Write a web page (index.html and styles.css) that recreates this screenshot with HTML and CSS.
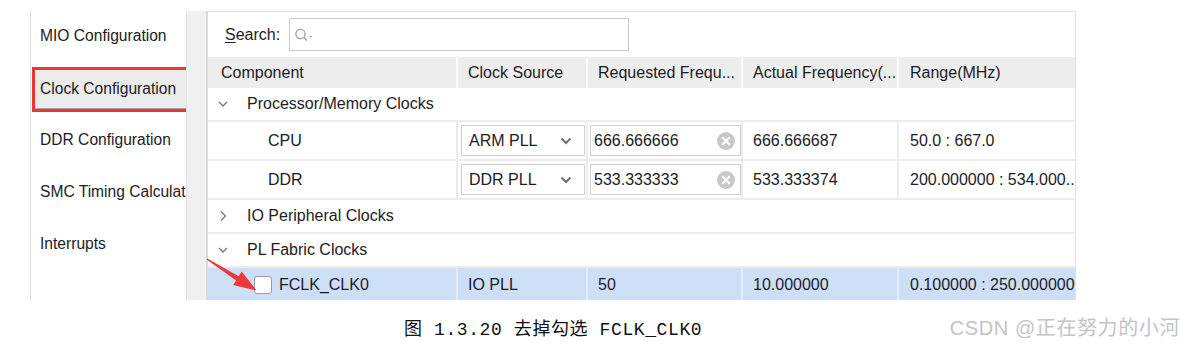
FILE: index.html
```html
<!DOCTYPE html>
<html lang="zh">
<head>
<meta charset="utf-8">
<title>Clock Configuration</title>
<link rel="stylesheet" href="styles.css">
</head>
<body>
<div class="page">
  <div class="app">
    <nav class="sidebar">
      <div class="nav-item">MIO Configuration</div>
      <div class="nav-item selected">Clock Configuration</div>
      <div class="nav-item">DDR Configuration</div>
      <div class="nav-item">SMC Timing Calculation</div>
      <div class="nav-item">Interrupts</div>
    </nav>
    <div class="splitter"></div>
    <section class="panel">
      <div class="search-row">
        <span class="search-label"><u>S</u>earch:</span>
        <div class="search-box">
          <svg class="search-icon" width="22" height="16" viewBox="0 0 22 16">
            <circle cx="6.5" cy="7" r="4.6" fill="none" stroke="#a4a4a4" stroke-width="1.4"/>
            <line x1="9.8" y1="10.3" x2="13" y2="13.5" stroke="#a4a4a4" stroke-width="1.6"/>
            <path d="M15 9 L18.4 9 L16.7 10.8 Z" fill="#a4a4a4"/>
          </svg>
        </div>
      </div>
      <div class="table">
        <div class="row header">
          <div class="cell first">Component</div>
          <div class="cell">Clock Source</div>
          <div class="cell">Requested Frequ...</div>
          <div class="cell">Actual Frequency(...</div>
          <div class="cell">Range(MHz)</div>
        </div>
        <div class="row group">
          <svg class="chev" width="10" height="10" viewBox="0 0 10 10"><path d="M1 3 L5 7 L9 3" fill="none" stroke="#777" stroke-width="1.3"/></svg>
          <span>Processor/Memory Clocks</span>
        </div>
        <div class="row data tall">
          <div class="cell name">CPU</div>
          <div class="cell boxed"><div class="select"><span>ARM PLL</span>
            <svg width="12" height="8" viewBox="0 0 12 8"><path d="M1.5 1.5 L6 6 L10.5 1.5" fill="none" stroke="#6f6f6f" stroke-width="2"/></svg></div></div>
          <div class="cell boxed input-cell"><div class="input"><span>666.666666</span>
            <svg width="20" height="20" viewBox="0 0 20 20"><circle cx="10" cy="10" r="9" fill="#c8c8c8"/><path d="M6.3 6.3 L13.7 13.7 M13.7 6.3 L6.3 13.7" stroke="#fff" stroke-width="2.2"/></svg></div></div>
          <div class="cell">666.666687</div>
          <div class="cell last">50.0 : 667.0</div>
        </div>
        <div class="row data tall">
          <div class="cell name">DDR</div>
          <div class="cell boxed"><div class="select"><span>DDR PLL</span>
            <svg width="12" height="8" viewBox="0 0 12 8"><path d="M1.5 1.5 L6 6 L10.5 1.5" fill="none" stroke="#6f6f6f" stroke-width="2"/></svg></div></div>
          <div class="cell boxed input-cell"><div class="input"><span>533.333333</span>
            <svg width="20" height="20" viewBox="0 0 20 20"><circle cx="10" cy="10" r="9" fill="#c8c8c8"/><path d="M6.3 6.3 L13.7 13.7 M13.7 6.3 L6.3 13.7" stroke="#fff" stroke-width="2.2"/></svg></div></div>
          <div class="cell">533.333374</div>
          <div class="cell last">200.000000 : 534.000...</div>
        </div>
        <div class="row group">
          <svg class="chev" width="10" height="12" viewBox="0 0 10 12"><path d="M3 1.5 L7.5 6 L3 10.5" fill="none" stroke="#777" stroke-width="1.3"/></svg>
          <span>IO Peripheral Clocks</span>
        </div>
        <div class="row group">
          <svg class="chev" width="10" height="10" viewBox="0 0 10 10"><path d="M1 3 L5 7 L9 3" fill="none" stroke="#777" stroke-width="1.3"/></svg>
          <span>PL Fabric Clocks</span>
        </div>
        <div class="row data selected-row">
          <div class="cell name check-cell"><span class="checkbox"></span>FCLK_CLK0</div>
          <div class="cell">IO PLL</div>
          <div class="cell">50</div>
          <div class="cell">10.000000</div>
          <div class="cell last">0.100000 : 250.000000</div>
        </div>
      </div>
    </section>
  </div>
  <svg class="arrow" width="70" height="50" viewBox="200 250 70 50">
    <polygon points="207.4,258.4 238.7,276.2 241.7,271.5 256.5,290.5 233.1,285.1 236.1,280.4 206.6,259.6" fill="#ee3a3a"/>
  </svg>
  <div class="caption-row">
    <div class="caption">图 1.3.20 去掉勾选 FCLK_CLK0</div>
    <div class="watermark">CSDN @正在努力的小河</div>
  </div>
</div>
</body>
</html>
```

FILE: styles.css
```css
* { box-sizing: border-box; }
html, body { margin: 0; padding: 0; background: #fff; }
body {
  width: 1185px;
  height: 355px;
  overflow: hidden;
  font-family: "Liberation Sans", Arial, sans-serif;
  font-size: 16px;
  color: #1c1c24;
}
.page {
  position: relative;
  width: 1185px;
  height: 355px;
  padding-top: 10px;
}
.app {
  display: flex;
  margin-left: 30px;
  width: 1046px;
  height: 290px;
}

/* sidebar */
.sidebar {
  width: 156px;
  flex: none;
  border-left: 1px solid #dcdcdc;
  margin-top: 1px;
  display: flex;
  flex-direction: column;
  font-size: 15.6px;
}
.nav-item {
  height: 52px;
  flex: none;
  display: flex;
  align-items: center;
  padding-left: 9px;
  white-space: nowrap;
  overflow: hidden;
  margin-top: -1px;
  margin-bottom: 1px;
}
.nav-item.selected {
  height: 39px;
  margin: 7px 0 6px 4px;
  padding-left: 5px;
  background: #ebebeb;
  border-bottom: 1px solid #a3a3a3;
  outline: 3px solid #ee3535;
}

/* splitter */
.splitter {
  width: 22px;
  flex: none;
  margin-top: 1px;
  background: #f0f0f0;
  border-left: 1px solid #e3e3e3;
  border-right: 2px solid #d8d8d8;
}

/* panel */
.panel {
  flex: 1;
  margin-top: 1px;
  border-top: 1px solid #e2e2e2;
  border-right: 1px solid #e2e2e2;
  overflow: hidden;
  display: flex;
  flex-direction: column;
}
.search-row {
  height: 45px;
  flex: none;
  display: flex;
  align-items: flex-start;
  padding: 6px 0 0 17px;
  gap: 9px;
}
.search-label {
  height: 33px;
  display: flex;
  align-items: center;
  width: 55px;
}
.search-label u { text-decoration-thickness: 1px; text-underline-offset: 2px; }
.search-box {
  width: 340px;
  height: 33px;
  border: 1px solid #cbcbcb;
  display: flex;
  align-items: center;
  padding-left: 4px;
}

.table { display: flex; flex-direction: column; }
.row {
  display: grid;
  grid-template-columns: 250px 130px 155px 156px 176px;
  border-bottom: 2px solid #ececec;
  flex: none;
}
.cell {
  display: flex;
  align-items: center;
  padding-left: 10px;
  white-space: nowrap;
  overflow: hidden;
  border-right: 2px solid #ececec;
}
.cell.last { border-right: none; padding-left: 11px; }
.header {
  height: 31px;
  background: #ededed;
  border-bottom: none;
}
.header .cell { border-right: 2px solid #f9f9f9; }
.header .cell.first { padding-left: 13px; }
.header .cell:last-child { border-right: none; padding-left: 11px; }

.group {
  display: flex;
  align-items: center;
  height: 34px;
}
.group:first-of-type { height: 32px; }
.group .chev { margin-left: 10px; margin-right: 19px; flex: none; }

.data { height: 34px; }
.data.tall { height: 39px; }
.cell.name { padding-left: 60px; }
.cell.boxed { padding: 3px 1px 3px 3px; align-items: stretch; }
.cell.input-cell { padding: 3px 0 3px 2px; }
.select, .input {
  flex: 1;
  border: 1px solid #d0d0d0;
  display: flex;
  align-items: center;
  justify-content: space-between;
  background: #fff;
}
.select { padding: 0 12px 0 7px; }
.input { padding: 0 4px 0 3px; }

.selected-row {
  background: #cddff7;
  border-bottom: none;
}
.selected-row .cell { border-right-color: #e4edf9; }
.check-cell.name { padding-left: 46px; }
.checkbox {
  width: 18px;
  height: 18px;
  border: 1.5px solid #9a9a9a;
  border-radius: 3px;
  background: #fff;
  margin-right: 7px;
  flex: none;
}

.arrow {
  position: absolute;
  left: 200px;
  top: 250px;
}

/* caption */
.caption-row {
  height: 55px;
  display: flex;
  align-items: center;
  padding-bottom: 2px;
}
.caption {
  margin-left: 404px;
  font-family: "Liberation Mono", "Noto Sans CJK SC", monospace;
  font-size: 18px;
  letter-spacing: 0.6px;
  color: #111;
}
.watermark {
  margin-left: auto;
  margin-right: 5px;
  font-family: "Liberation Sans", "Noto Sans CJK SC", sans-serif;
  font-size: 20px;
  letter-spacing: 0.6px;
  color: #c4c4c4;
}
```
